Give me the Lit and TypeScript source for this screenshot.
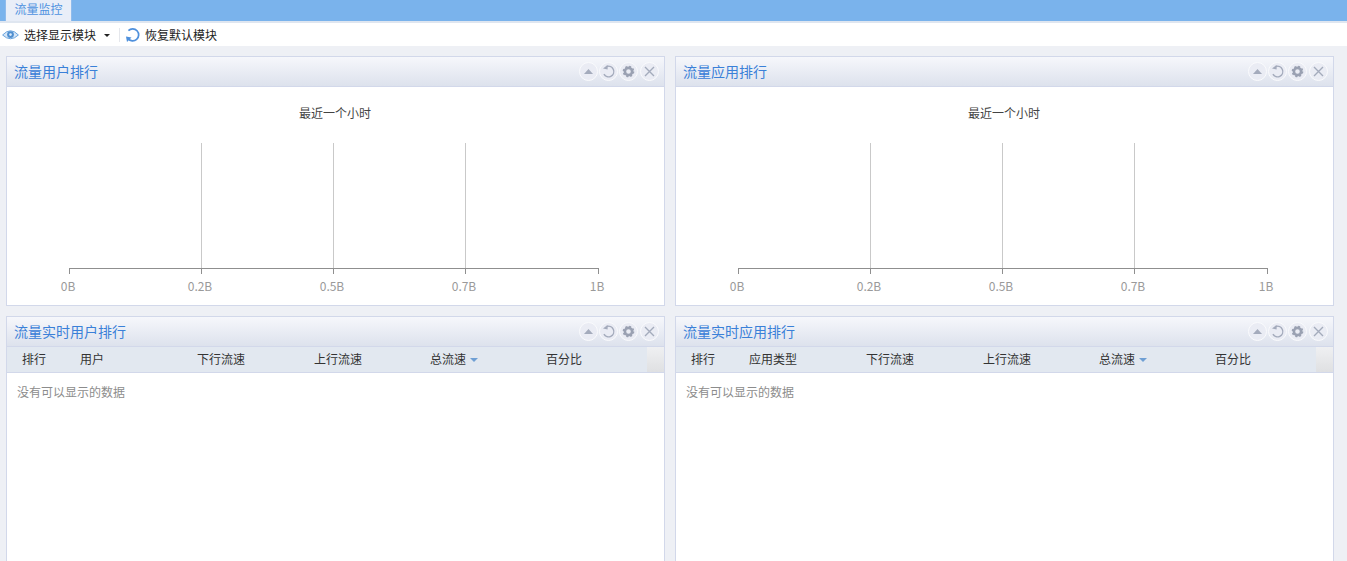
import { LitElement, html, css, svg } from "lit";
import { customElement } from "lit/decorators.js";

const btns = () => html`<div class="btns">
  <span class="b"><svg width="17" height="17" viewBox="0 0 17 17"><path d="M8.5 6 L13 11 H4 Z" fill="#a4abbc"/></svg></span>
  <span class="b"><svg width="17" height="17" viewBox="0 0 17 17"><path d="M6.8 3.5 A5.3 5.3 0 1 1 3.9 11.2" fill="none" stroke="#a4abbc" stroke-width="1.4"/><path d="M3 5.4 L7.6 2 L7.6 6.6 Z" fill="#a4abbc"/></svg></span>
  <span class="b"><svg width="17" height="17" viewBox="0 0 17 17"><circle cx="8.5" cy="8.5" r="3.6" fill="none" stroke="#9aa1b2" stroke-width="2.6"/><circle cx="8.5" cy="8.5" r="5" fill="none" stroke="#9aa1b2" stroke-width="1.6" stroke-dasharray="2 1.93"/></svg></span>
  <span class="b"><svg width="17" height="17" viewBox="0 0 17 17"><path d="M4 4L13 13M13 4L4 13" stroke="#a4abbc" stroke-width="1.4"/></svg></span>
</div>`;

const chart = () => {
  const xs = [62, 194, 326, 458, 591];
  const labels = ["0B", "0.2B", "0.5B", "0.7B", "1B"];
  return html`<svg class="chart" width="657" height="218" viewBox="0 0 657 218">
    ${xs.slice(1, 4).map((x) => svg`<line x1=${x + 0.5} x2=${x + 0.5} y1="56" y2="181" stroke="#c9c9c9"/>`)}
    <line x1="62" x2="592" y1="181.5" y2="181.5" stroke="#8f8f8f"/>
    ${xs.map((x) => svg`<line x1=${x + 0.5} x2=${x + 0.5} y1="181" y2="187" stroke="#8f8f8f"/>`)}
    ${xs.map((x, i) => svg`<text x=${x - 1} y="204" text-anchor="middle" class="tick">${labels[i]}</text>`)}
    <text x="328" y="31" text-anchor="middle" class="ctitle">最近一个小时</text>
  </svg>`;
};

@customElement("app-root")
export class AppRoot extends LitElement {
  static styles = css`
    :host { display: block; height: 561px; overflow: hidden; background: #eef0f5; font-family: "Noto Sans CJK SC", "Liberation Sans", sans-serif; font-size: 12px; color: #333; }
    .top { height: 21px; background: #7ab3ec; padding-left: 5px; display: flex; }
    .tab { width: 67px; box-sizing: border-box; height: 21px; background: #e9eef8; border: 1px solid #8fbbec; border-width: 0 1px; color: #4f92e0; text-align: center; line-height: 18px; }
    .line { height: 2px; background: #dfe6f0; }
    .tool { height: 23px; background: #fff; display: flex; align-items: center; color: #222; padding-left: 2px; }
    .lbl { margin-left: 5px; }
    .lbl2 { margin-left: 4px; }
    .caret { width: 0; height: 0; border: 3px solid transparent; border-top: 3px solid #222; border-bottom: 0; margin: 1px 9px 0 8px; }
    .sep { width: 1px; height: 14px; background: #e5e7ec; margin-right: 5px; }
    .grid { display: grid; grid-template-columns: 659px 659px; column-gap: 10px; row-gap: 10px; padding: 10px 0 0 6px; }
    .panel { background: #fff; border: 1px solid #d2d8ea; box-sizing: border-box; }
    .p1 { height: 250px; }
    .p2 { height: 300px; }
    .head { height: 30px; box-sizing: border-box; border-bottom: 1px solid #d2d8ea; background: linear-gradient(#f6f7fb, #dde2ed); display: flex; align-items: center; justify-content: space-between; padding: 0 5.5px 0 7px; color: #3a80d8; font-size: 14px; line-height: 28px; }
    .head > span { position: relative; top: -1px; }
    .btns { display: flex; gap: 1.33px; }
    .b { width: 19px; height: 19px; border-radius: 50%; background: #eaecf4; border: 1px solid #fafbfd; box-sizing: border-box; display: flex; align-items: center; justify-content: center; }
    .b svg { flex: none; }
    .chart { display: block; }
    .tick { font-size: 12px; fill: #9a9a9a; }
    .ctitle { font-size: 12px; fill: #444; }
    .thead { height: 26px; box-sizing: border-box; background: #e2e8f0; border-bottom: 1px solid #d2d8ea; display: grid; grid-template-columns: 58px 117px 117px 116px 116px 116px 1fr; align-items: center; color: #333; }
    .thead > div { padding: 0 0 2px 15px; white-space: nowrap; }
    .thead .corner { padding: 0; height: 25px; background: linear-gradient(#eff0f2, #dfe0e2); }
    .sort { display: inline-block; width: 0; height: 0; border: 4px solid transparent; border-top: 4px solid #6f9fd4; border-bottom: 0; margin-left: 4px; vertical-align: 2px; }
    .empty { padding: 10px 0 0 10px; color: #8c8c8c; }
  `;

  panelTop(title: string) {
    return html`<div class="panel p1"><div class="head"><span>${title}</span>${btns()}</div>${chart()}</div>`;
  }
  panelBot(title: string, col: string) {
    const cols = ["排行", col, "下行流速", "上行流速"];
    return html`<div class="panel p2"><div class="head"><span>${title}</span>${btns()}</div>
      <div class="thead">
        ${cols.map((c) => html`<div>${c}</div>`)}
        <div>总流速<span class="sort"></span></div>
        <div>百分比</div>
        <div class="corner"></div>
      </div>
      <div class="empty">没有可以显示的数据</div>
    </div>`;
  }
  render() {
    return html`
      <div class="top"><div class="tab">流量监控</div></div>
      <div class="line"></div>
      <div class="tool">
        <svg width="17" height="12" viewBox="0 0 17 12"><path d="M0.6 6 Q8.5 -2.5 16.4 6 Q8.5 13.5 0.6 6 Z" fill="#d5e5f6" stroke="#6ba5de"/><circle cx="8.5" cy="5.6" r="3.4" fill="#4f8fd0"/><circle cx="8.5" cy="5.6" r="1.3" fill="#dcebf9"/></svg>
        <span class="lbl">选择显示模块</span><span class="caret"></span><span class="sep"></span>
        <svg width="16" height="16" viewBox="0 0 16 16"><path d="M3.4 3.6 A6 6 0 1 1 3 11.6" fill="none" stroke="#4f90dc" stroke-width="1.7"/><path d="M1 9.5 L6.5 10.5 L2 15 Z" fill="#4f90dc"/></svg>
        <span class="lbl2">恢复默认模块</span>
      </div>
      <div class="grid">
        ${this.panelTop("流量用户排行")}${this.panelTop("流量应用排行")}
        ${this.panelBot("流量实时用户排行", "用户")}${this.panelBot("流量实时应用排行", "应用类型")}
      </div>`;
  }
}
